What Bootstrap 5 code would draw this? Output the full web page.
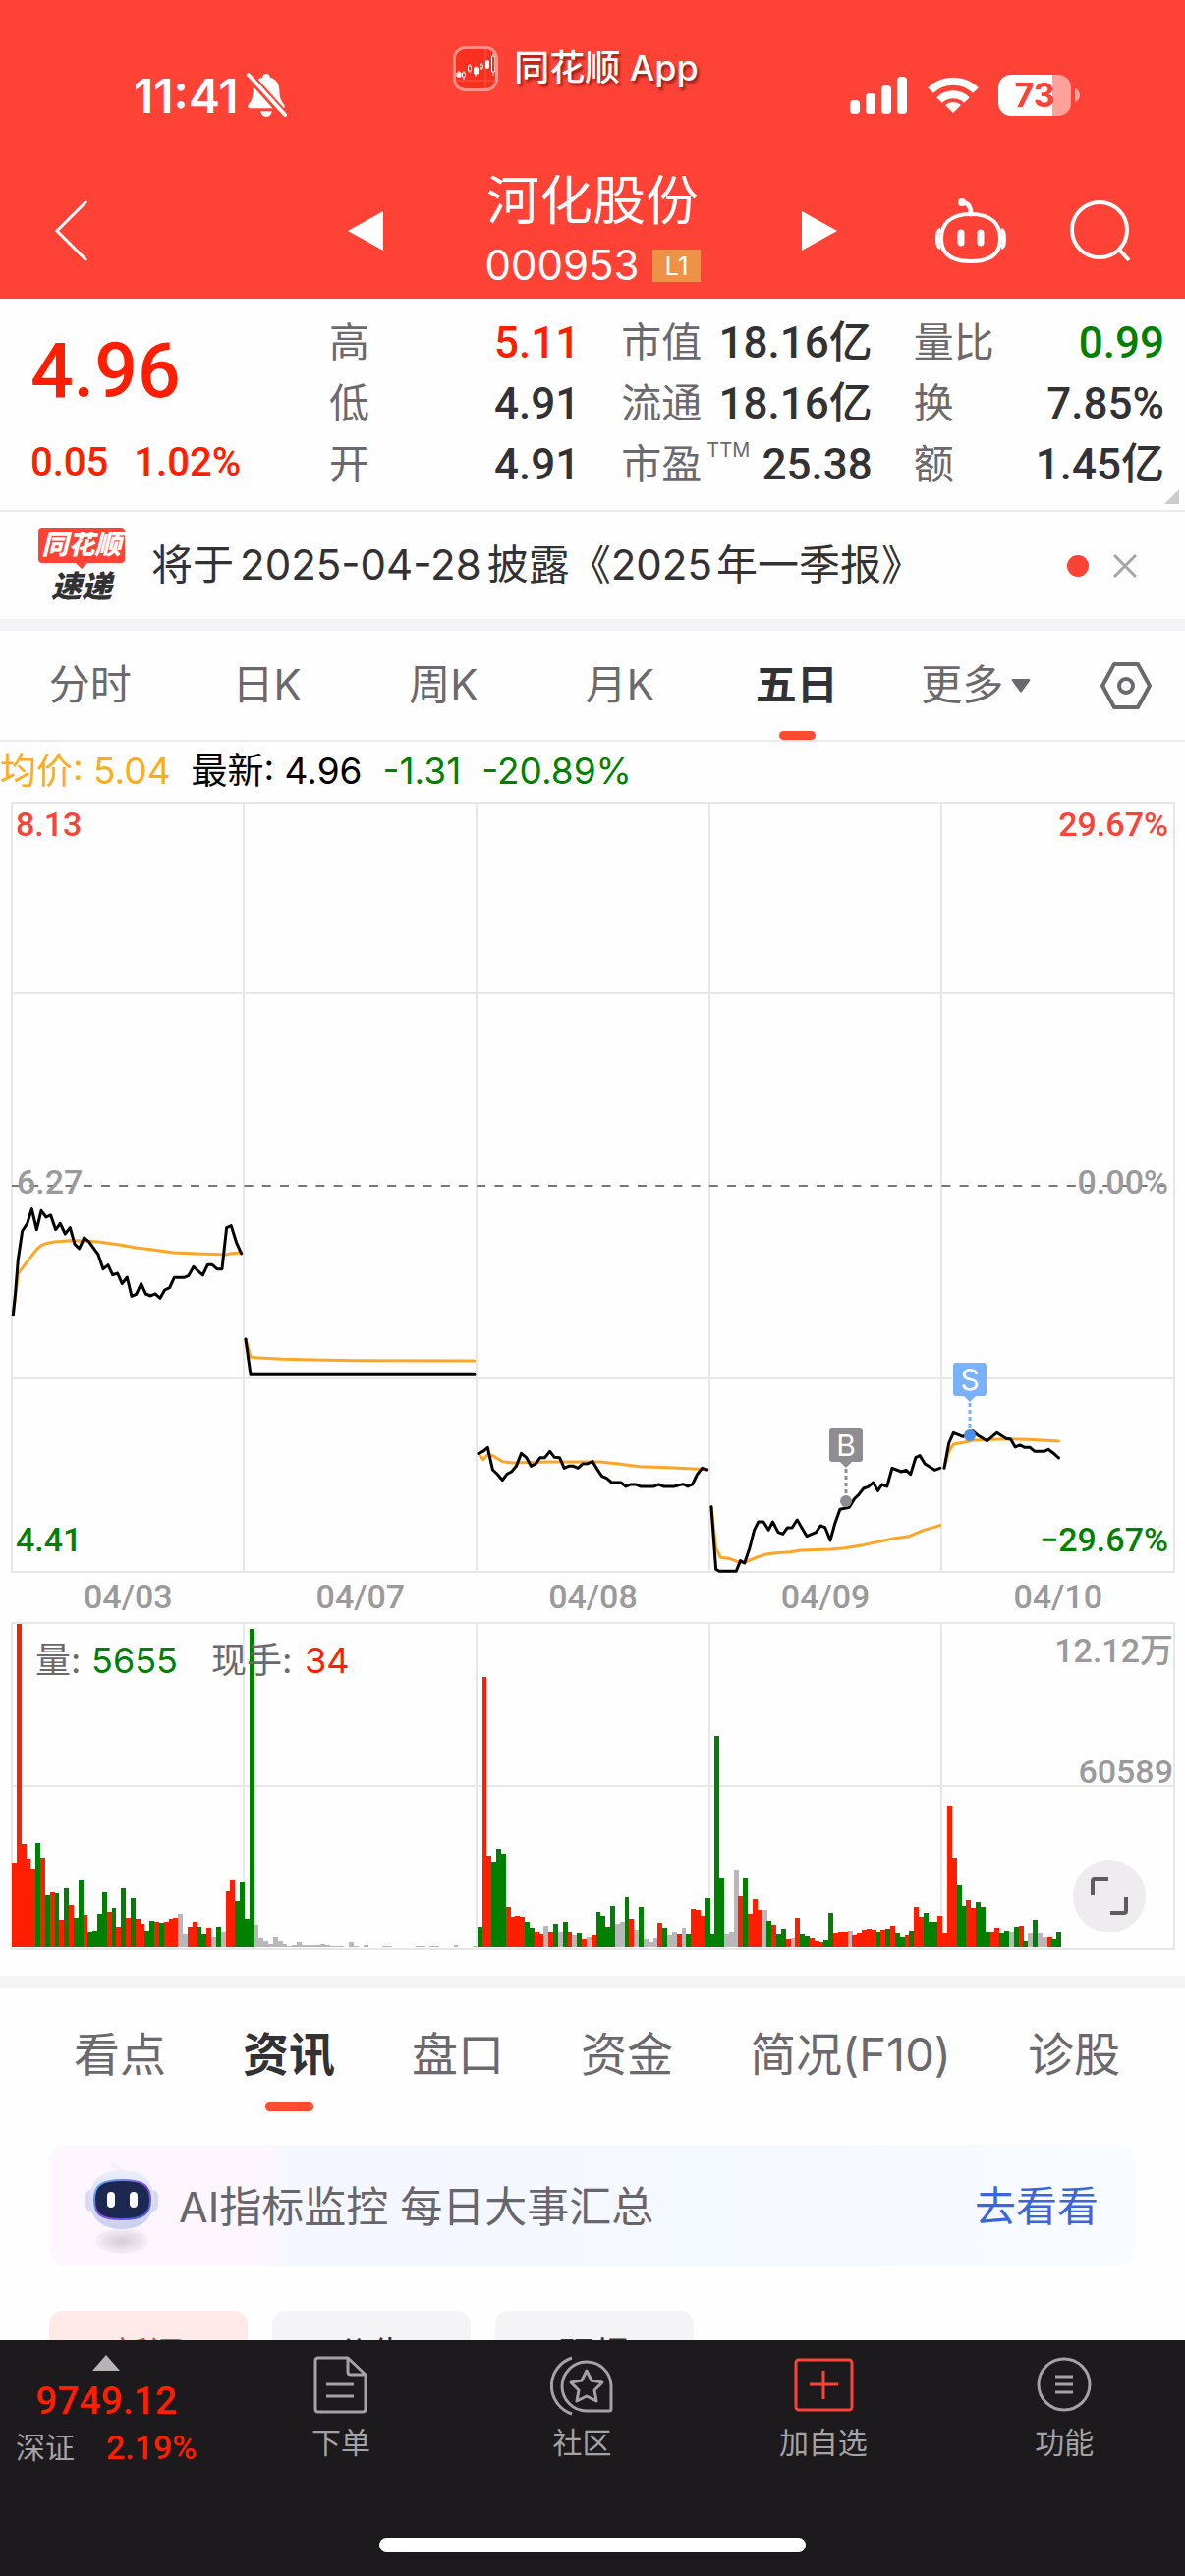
<!DOCTYPE html>
<html lang="zh-CN">
<head>
<meta charset="utf-8">
<meta name="viewport" content="width=device-width, initial-scale=1">
<title>河化股份 000953</title>
<link href="https://cdn.jsdelivr.net/npm/bootstrap@5.3.0/dist/css/bootstrap.min.css" rel="stylesheet">
<style>
  :root { --brand: #ff4236; --up: #ff1e00; --down: #008000; --ink: #323133; --soft: #6b696d; --mute: #9a999c; --line: #ebeaec; --band: #f4f3f6; }
  body { font-family: Inter, "Noto Sans CJK SC", sans-serif; color: var(--ink); background: #fefefe; line-height: 1.2; }
  a, button { color: inherit; text-decoration: none; }
  button { background: none; border: 0; padding: 0; }
  svg { display: block; flex: none; }
  .num { font-family: Roboto, "Noto Sans CJK SC", sans-serif; font-weight: 500; }
  .up { color: var(--up); } .down { color: var(--down); }

  .app-head { background: var(--brand); color: #fff; }
  .three-col { display: grid; grid-template-columns: 1fr auto 1fr; }
  .status-bar { height: 153px; padding: 0 106px 0 78px; }
  .status-side { padding-top: 68px; }
  .status-side.start { padding-left: 58px; gap: 7px; }
  .status-side.end { padding-top: 76px; gap: 20px; }
  .clock { font-size: 48px; font-weight: 600; line-height: 60px; }
  .brand-tag { font-size: 36px; font-weight: 500; padding-top: 46px; gap: 16px; text-shadow: 2px 3px 3px rgba(60,0,0,.55); height: 94px; }
  .brand-tag span { padding-right: 6px; }
  .battery { width: 74px; height: 42px; border-radius: 13px; font-size: 34px; font-weight: 700; color: var(--brand); background: linear-gradient(90deg, #fff 74%, #ffa19b 74%); }
  .title-bar { height: 151px; padding: 12px 54px 0; }
  .title-mid { padding: 8px 103px 0; }
  .stock-name { font-size: 54px; line-height: 64px; font-weight: 400; }
  .stock-code { font-size: 42px; line-height: 46px; gap: 14px; margin-top: 10px; }
  .level { font-size: 26px; line-height: 33px; padding: 0 12px; background: #ee9248; }

  .quote { display: grid; grid-template-columns: 262px repeat(3, 1fr); column-gap: 42px; padding: 14px 21px 15px 31px; border-bottom: 2px solid var(--line); }
  .price { font-size: 77px; line-height: 120px; }
  .change { font-size: 40px; line-height: 66px; gap: 26px; }
  .pair { height: 62px; }
  .pair dt { font-size: 41px; font-weight: 400; color: var(--soft); }
  .pair dd { font-size: 44px; }
  .pair sup { font-size: 20px; top: -22px; margin-left: 5px; font-weight: 400; vertical-align: baseline; position: relative; }
  .fold { right: 6px; bottom: 6px; }

  .notice { height: 109px; padding: 0 49px 0 38px; }
  .notice-logo { width: 90px; font-style: italic; font-weight: 900; line-height: 36px; }
  .logo-top { background: var(--brand); color: #fff; font-size: 27px; border-radius: 4px; width: 88px; }
  .logo-low { font-size: 31px; line-height: 36px; }
  .notice-text { font-size: 42px; margin-left: 26px; }
  .gap-s { margin: 0 6px; }
  .dot { width: 22px; height: 22px; border-radius: 50%; background: var(--brand); margin-right: 25px; }
  .band { height: 12px; background: var(--band); }

  .period { display: grid; grid-template-columns: repeat(5, 3fr) 3.1fr 2fr; height: 113px; border-bottom: 2px solid var(--line); font-size: 42px; color: var(--soft); padding-left: 2px; }
  .tab-item { position: relative; display: flex; align-items: center; justify-content: center; }
  .tab-item.current { font-weight: 700; color: var(--ink); }
  .tab-item.current::after { content: ""; position: absolute; bottom: 0; left: 50%; width: 37px; height: 9px; margin-left: -18px; border-radius: 5px; background: #ff4b2f; }
  .readout { height: 61px; font-size: 37px; gap: 21px; white-space: pre; }
  .days { display: grid; grid-template-columns: repeat(5, 1fr); padding: 0 11px 0 12px; height: 50px; font-size: 34px; color: var(--mute); }
  .days span { text-align: center; line-height: 48px; }
  .chart text { font: 500 34px Roboto, "Noto Sans CJK SC", sans-serif; fill: var(--mute); }
  .chart .plain { font: 400 36px Inter, "Noto Sans CJK SC", sans-serif; fill: var(--soft); }
  .chart .pin { font-size: 30px; fill: #fff; }
  .chart .t-red { fill: var(--brand); } .chart .t-up { fill: var(--up); } .chart .t-down { fill: var(--down); }
  .grid-line { stroke: #e7e6e9; stroke-width: 2; fill: none; }
  .series polyline { fill: none; stroke: #000; stroke-width: 3; stroke-linejoin: round; stroke-linecap: round; vector-effect: non-scaling-stroke; }
  .series .avg { stroke: #ffa526; }
  .expand { right: 40px; top: 242px; width: 74px; height: 74px; border-radius: 50%; background: #eeecef; }
  .vol-box { padding-bottom: 26px; }

  .sections { height: 126px; padding: 0 66px 0 75px; font-size: 47px; color: var(--soft); }
  .sections .tab-item { height: 136px; margin-bottom: -10px; }
  .sections .current::after { width: 49px; margin-left: -24px; bottom: 10px; }
  .promo { margin: 34px 50px 0; height: 123px; border-radius: 18px; padding: 4px 38px 0 36px; font-size: 43px; color: #68666b; gap: 20px; background: linear-gradient(90deg, #fdf6ff 20%, #f4f7ff 22%, #f4f8ff 60%, #f8fcff); }
  .promo a { color: #3a66dc; font-size: 42px; }
  .chips { padding: 46px 50px 0; gap: 25px; }
  .chip { width: 202px; height: 90px; border-radius: 14px; font-size: 36px; line-height: 44px; background: var(--band); }
  .chip.on { background: #ffe9e9; color: var(--brand); }

  .dock { background: #1c1a1d; color: #a3a2a5; height: 240px; }
  .dock-row { display: grid; grid-template-columns: 224fr repeat(4, 245fr); height: 130px; font-size: 30px; }
  .dock-index { padding: 15px 8px 0 0; }
  .dock-item { gap: 9px; padding-top: 13px; font-size: 30px; line-height: 36px; }
  .dock svg { stroke: currentColor; fill: none; stroke-width: 3; stroke-linejoin: round; }
  .index-num { font-size: 39px; line-height: 46px; margin-top: 8px; }
  .index-row { gap: 32px; line-height: 48px; }
  .index-row .num { font-size: 34px; }
  .home-bar { width: 36%; height: 15px; border-radius: 8px; background: #fff; margin: 71px auto 0; }
</style>
</head>
<body>

<header class="app-head">
  <div class="status-bar three-col">
    <div class="status-side start d-flex align-items-start">
      <span class="clock">11:41</span>
      <svg width="42" height="50" viewBox="0 0 44 50" class="mt-1" fill="#fff"><path d="M22 2c-3 0-4 2-4 4-7 2-10 7-10 14 0 8-2 11-5 15-1 2-1 4 2 4h34c3 0 3-2 2-4-3-4-5-7-5-15 0-7-3-12-10-14 0-2-1-4-4-4zM16 42a6 6 0 0 0 12 0z"/><path d="M1 1 43 48" stroke="#ff4236" stroke-width="9"/><path d="M3 3 42 46" stroke="#fff" stroke-width="4" stroke-linecap="round"/></svg>
    </div>
    <div class="brand-tag d-flex align-items-center">
      <svg width="46" height="46" viewBox="0 0 46 46"><rect x="1.500" y="1.500" width="43" height="43" rx="11" fill="#f8301f" stroke="#ff938a" stroke-width="3"/><path d="M33 3v40M4 35h38" stroke="#ff5a4a"/><g stroke="#fff" fill="#f8301f"><path d="M6 25v7M11 25v9M17 18v9M23 20v11M29 17v7M35 14v9M41 7v23"/><path d="M9.500 27h3v4h-3zM15.500 20h3v5h-3zM27.500 19h3v3h-3zM39.500 10h3v16h-3z"/><path fill="#fff" d="M4 27h4v4H4zM21.500 22h4v6h-4zM33.500 15h3v7h-3z"/></g></svg>
      <span>同花顺 App</span>
    </div>
    <div class="status-side end d-flex justify-content-end align-items-center align-self-start">
      <svg width="59" height="38" viewBox="0 0 59 38" fill="#fff"><rect y="24" width="10" height="14" rx="4"/><rect x="16" y="17" width="10" height="21" rx="4"/><rect x="32" y="9" width="10" height="29" rx="4"/><rect x="48" width="10" height="38" rx="4"/></svg>
      <svg width="52" height="38" viewBox="0 0 52 38" fill="none" stroke="#fff" stroke-width="8"><path d="M3 14a33 33 0 0 1 46 0"/><path d="M12 24a20 20 0 0 1 28 0"/><path d="M26 37l-8-8a12 12 0 0 1 16 0z" fill="#fff" stroke="none"/></svg>
      <div class="d-flex align-items-center gap-1">
        <span class="battery d-flex align-items-center justify-content-center">73</span>
        <svg width="6" height="14" viewBox="0 0 6 14"><path d="M0 0q5 2 5 7t-5 7z" fill="#ffa19b"/></svg>
      </div>
    </div>
  </div>
  <div class="title-bar three-col">
    <div class="d-flex align-items-center justify-content-between">
      <button aria-label="返回"><svg width="38" height="64" viewBox="0 0 38 64" fill="none" stroke="#fff" stroke-width="3"><path d="M34 2 4 32l30 30"/></svg></button>
      <button aria-label="上一只"><svg width="36" height="40" viewBox="0 0 36 40"><path d="M36 0v40L0 20z" fill="#fff"/></svg></button>
    </div>
    <div class="title-mid d-flex flex-column align-items-center">
      <h1 class="stock-name m-0">河化股份</h1>
      <div class="stock-code d-flex align-items-center"><span>000953</span><span class="level">L1</span></div>
    </div>
    <div class="d-flex align-items-center justify-content-between">
      <button aria-label="下一只"><svg width="36" height="40" viewBox="0 0 36 40"><path d="M0 0v40l36-20z" fill="#fff"/></svg></button>
      <div class="d-flex align-items-center" style="gap:64px">
        <button aria-label="智能助手"><svg width="72" height="68" viewBox="0 0 72 68" fill="none" stroke="#fff" stroke-width="4"><path d="M36 17q0-9-5-11" stroke-width="5" stroke-linecap="round"/><circle cx="27" cy="5" r="4" fill="#fff" stroke="none"/><path d="M36 17C14 17 6 28 6 42s8 23 30 23 30-9 30-23-8-25-30-25z"/><path d="M5 33q-3 0-3 9t3 9M67 33q3 0 3 9t-3 9"/><path d="M26 36v10M46 36v10" stroke-width="7" stroke-linecap="round"/></svg></button>
        <button aria-label="搜索"><svg width="64" height="64" viewBox="0 0 64 64" fill="none" stroke="#fff" stroke-width="4"><circle cx="31" cy="31" r="28"/><path d="M51 51l10 11"/></svg></button>
      </div>
    </div>
  </div>
</header>

<main>
  <section class="quote position-relative">
    <div>
      <div class="price num up">4.96</div>
      <div class="change num up d-flex"><span>0.05</span><span>1.02%</span></div>
    </div>
    <dl class="m-0">
      <div class="pair d-flex align-items-center justify-content-between"><dt>高</dt><dd class="num up m-0">5.11</dd></div>
      <div class="pair d-flex align-items-center justify-content-between"><dt>低</dt><dd class="num m-0">4.91</dd></div>
      <div class="pair d-flex align-items-center justify-content-between"><dt>开</dt><dd class="num m-0">4.91</dd></div>
    </dl>
    <dl class="m-0">
      <div class="pair d-flex align-items-center justify-content-between"><dt>市值</dt><dd class="num m-0">18.16亿</dd></div>
      <div class="pair d-flex align-items-center justify-content-between"><dt>流通</dt><dd class="num m-0">18.16亿</dd></div>
      <div class="pair d-flex align-items-center justify-content-between"><dt>市盈<sup>TTM</sup></dt><dd class="num m-0">25.38</dd></div>
    </dl>
    <dl class="m-0">
      <div class="pair d-flex align-items-center justify-content-between"><dt>量比</dt><dd class="num down m-0">0.99</dd></div>
      <div class="pair d-flex align-items-center justify-content-between"><dt>换</dt><dd class="num m-0">7.85%</dd></div>
      <div class="pair d-flex align-items-center justify-content-between"><dt>额</dt><dd class="num m-0">1.45亿</dd></div>
    </dl>
    <svg class="fold position-absolute" width="15" height="15" viewBox="0 0 15 15"><path d="M15 0v15H0z" fill="#cbcacc"/></svg>
  </section>

  <section class="notice d-flex align-items-center">
    <div class="notice-logo d-flex flex-column align-items-center">
      <span class="logo-top text-center">同花顺</span>
      <svg width="12" height="6" viewBox="0 0 12 6"><path d="M0 0h12L6 6z" fill="#ff4236"/></svg>
      <span class="logo-low">速递</span>
    </div>
    <a href="#" class="notice-text">将于<span class="gap-s">2025-04-28</span>披露《2025<span class="ms-1">年一季报》</span></a>
    <span class="dot ms-auto"></span>
    <button aria-label="关闭"><svg width="24" height="24" viewBox="0 0 24 24" stroke="#a5a4a7" stroke-width="3"><path d="M1 1l22 22M23 1 1 23"/></svg></button>
  </section>
  <div class="band"></div>

  <nav class="period">
    <a href="#" class="tab-item">分时</a>
    <a href="#" class="tab-item">日K</a>
    <a href="#" class="tab-item">周K</a>
    <a href="#" class="tab-item">月K</a>
    <a href="#" class="tab-item current">五日</a>
    <a href="#" class="tab-item">更多<svg class="ms-2" width="20" height="14" viewBox="0 0 20 14"><path d="M2 0h16q2 0 1 2l-8 11q-1 1-2 0L1 2Q0 0 2 0z" fill="#6b696d"/></svg></a>
    <button class="tab-item" aria-label="设置"><svg width="52" height="48" viewBox="0 0 52 48" fill="none" stroke="#6b696d" stroke-width="4" stroke-linejoin="round"><path d="M14 2h24l12 22-12 22H14L2 24z"/><circle cx="26" cy="24" r="7"/></svg></button>
  </nav>

  <div class="readout d-flex align-items-center">
    <span style="color:#ffac1c">均价: 5.04</span><span class="text-black">最新: 4.96</span><span class="down">-1.31</span><span class="down">-20.89%</span>
  </div>

  <svg class="chart w-100" viewBox="0 0 1206 785">
    <path class="grid-line" d="M12 1H1195V784H12zM12 195H1195M12 587H1195M248 1V784M485 1V784M722 1V784M958 1V784"/>
    <path d="M12 391H1188" stroke="#777" stroke-width="2" stroke-dasharray="9 9.200"/>
    <text class="t-red" x="16" y="35">8.13</text>
    <text class="t-red" x="1189" y="35" text-anchor="end">29.67%</text>
    <text x="17" y="399">6.27</text>
    <text x="1189" y="399" text-anchor="end">0.00%</text>
    <text class="t-down" x="16" y="763">4.41</text>
    <text class="t-down" x="1189" y="763" text-anchor="end">−29.67%</text>
    <g class="series" transform="translate(0 363) scale(.3333)">
      <polyline class="avg" points="40,479 55,352 75,326 112,278 126,266 140,260 165,255 215,251 260,252 300,255 360,263 415,273 460,278 530,288 600,291 690,294 707,290 737,288"/>
      <polyline points="40,479 47,410 55,310 68,222 83,200 97,155 112,218 126,160 141,180 155,174 170,218 184,199 199,231 214,212 228,262 242,276 257,243 271,254 300,294 315,338 330,326 344,356 359,351 373,383 388,363 402,421 416,415 431,383 445,414 460,420 474,414 489,427 503,402 518,395 532,364 562,364 576,358 591,331 619,357 634,325 648,325 663,338 678,338 692,212 706,206 722,258 737,291"/>
      <polyline class="avg" points="750,552 765,606 780,608 860,613 960,615 1080,617 1449,618"/>
      <polyline points="750,552 765,661 1449,661"/>
    </g>
    <g class="series" transform="translate(470 563) scale(.4694 .3333)">
      <polyline class="avg" points="36,301 46,320 56,305 67,308 88,326 110,330 190,327 300,327 340,333 385,341 460,345 532,350"/>
      <polyline points="36,301 46,295 56,283 67,351 78,366 88,383 98,364 108,357 118,340 129,301 140,314 150,340 160,333 170,314 180,314 191,295 201,313 212,314 222,346 232,340 242,340 252,346 262,333 273,332 284,326 294,351 304,371 314,377 325,390 345,390 356,402 366,396 377,396 387,402 417,402 427,396 438,402 460,402 480,395 490,402 500,396 510,366 521,346 532,351"/>
      <polyline class="avg" points="541,464 551,590 561,619 580,622 600,633 613,634 640,618 660,609 680,605 712,602 735,597 800,594 830,590 870,581 935,561 970,554 1000,536 1037,521"/>
      <polyline points="541,464 551,655 558,661 595,661 604,629 613,636 624,590 634,535 643,510 654,510 665,535 674,510 686,542 696,547 706,528 716,528 727,504 748,554 768,542 778,522 788,528 799,567 809,515 820,472 840,466 851,440 860,428 871,408 881,403 892,390 902,415 911,396 922,402 933,346 953,357 963,352 973,365 984,314 993,308 1004,333 1025,352 1037,346"/>
      <polyline class="avg" points="1046,346 1056,295 1066,273 1090,267 1110,261 1180,257 1230,259 1294,264"/>
      <polyline points="1046,346 1056,270 1066,238 1087,250 1098,240 1108,233 1118,245 1139,263 1160,238 1180,256 1190,258 1200,282 1210,276 1221,283 1232,283 1242,295 1262,295 1272,289 1282,300 1294,315"/>
    </g>
    <g fill="#8f8d91"><rect x="844" y="638" width="34" height="34" rx="3"/><path d="M855 672h12l-6 6z"/><circle cx="861" cy="712" r="6"/><path d="M861 679v28" stroke="#8f8d91" stroke-width="3" stroke-dasharray="4 3"/></g>
    <g fill="#7ab1fb"><rect x="970" y="571" width="34" height="34" rx="3"/><path d="M981 605h12l-6 6z"/><circle cx="987" cy="645" r="6" fill="#4a90e8"/><path d="M987 612v28" stroke="#7ab1fb" stroke-width="3" stroke-dasharray="4 3"/></g>
    <text class="plain pin" x="861" y="666" text-anchor="middle">B</text>
    <text class="plain pin" x="987" y="599" text-anchor="middle">S</text>
  </svg>
  <div class="days num"><span>04/03</span><span>04/07</span><span>04/08</span><span>04/09</span><span>04/10</span></div>

  <div class="vol-box position-relative">
    <svg class="chart w-100" viewBox="0 0 1206 334">
      <path class="grid-line" d="M12 1H1195V333H12zM12 167H1195M248 1V333M485 1V333M722 1V333M958 1V333"/>
      <g id="volume" shape-rendering="crispEdges"></g>
      <text class="plain" x="36" y="52">量:</text><text class="plain t-down" x="93" y="52">5655</text>
      <text class="plain" x="215" y="52">现手:</text><text class="plain t-up" x="310" y="52">34</text>
      <text x="1194" y="41" text-anchor="end">12.12万</text>
      <text x="1194" y="164" text-anchor="end">60589</text>
    </svg>
    <button class="expand position-absolute d-flex align-items-center justify-content-center" aria-label="全屏"><svg width="38" height="38" viewBox="0 0 38 38" fill="none" stroke="#5d5b5f" stroke-width="4"><path d="M2 18V4q0-2 2-2h14M36 20v14q0 2-2 2H20"/></svg></button>
  </div>
  <div class="band"></div>

  <nav class="sections d-flex justify-content-between">
    <a href="#" class="tab-item">看点</a>
    <a href="#" class="tab-item current">资讯</a>
    <a href="#" class="tab-item">盘口</a>
    <a href="#" class="tab-item">资金</a>
    <a href="#" class="tab-item">简况(F10)</a>
    <a href="#" class="tab-item">诊股</a>
  </nav>

  <section class="promo d-flex align-items-center">
    <svg width="76" height="100" viewBox="0 0 76 100">
      <defs>
        <linearGradient id="shell" x1="0" y1="0" x2="0" y2="1"><stop offset="0" stop-color="#eceefb"/><stop offset="1" stop-color="#c9cfef"/></linearGradient>
        <linearGradient id="rim" x1="0" y1="0" x2="1" y2="1"><stop offset="0" stop-color="#58bdf5"/><stop offset=".5" stop-color="#8a4ae0"/><stop offset="1" stop-color="#3f63ea"/></linearGradient>
        <radialGradient id="shade"><stop offset="0" stop-color="#d3cdd9"/><stop offset="1" stop-color="#f6effa"/></radialGradient>
      </defs>
      <ellipse cx="38" cy="84" rx="27" ry="13" fill="url(#shade)"/>
      <path d="M27 6q8 2 10 8" stroke="#f3f1fb" stroke-width="5" fill="none"/>
      <rect x="1" y="32" width="74" height="22" rx="6" fill="#d5daf5"/>
      <path d="M38 12C13 12 5 26 5 42s10 30 33 30 33-14 33-30-8-30-33-30z" fill="url(#shell)"/>
      <path d="M38 22c-21 0-28 5-28 20s7 20 28 20 29-5 29-20-8-20-29-20z" fill="#1d2850" stroke="url(#rim)" stroke-width="2"/>
      <path d="M27 38v8M50 38v8" stroke="#fff" stroke-width="8" stroke-linecap="round"/>
    </svg>
    <span>AI指标监控 每日大事汇总</span>
    <a href="#" class="ms-auto">去看看</a>
  </section>

  <div class="chips d-flex">
    <button class="chip on">新闻</button>
    <button class="chip">公告</button>
    <button class="chip">研报</button>
  </div>
</main>

<footer class="dock fixed-bottom">
  <nav class="dock-row">
    <a href="#" class="dock-index d-flex flex-column align-items-center">
      <svg width="28" height="16" viewBox="0 0 28 16" style="stroke:none;fill:#b5b4b7"><path d="M14 0l14 16H0z"/></svg>
      <span class="index-num num up">9749.12</span>
      <span class="index-row d-flex align-items-center"><span>深证</span><span class="num up">2.19%</span></span>
    </a>
    <a href="#" class="dock-item d-flex flex-column align-items-center"><svg width="64" height="64" viewBox="0 0 64 64"><path d="M39 5H9q-3 0-3 3v49q0 3 3 3h45q3 0 3-3V22zM39 5v14q0 3 3 3h15M17 32h28M17 44h28"/></svg>下单</a>
    <a href="#" class="dock-item d-flex flex-column align-items-center"><svg width="64" height="64" viewBox="0 0 64 64"><path d="M62 33A25 25 0 1 0 37 59h23q2 0 2-2z"/><path d="M22 5a30 30 0 0 0 0 57"/><path d="M37 18l5 10 11 2-8 8 2 11-10-5-10 5 2-11-8-8 11-2z"/></svg>社区</a>
    <a href="#" class="dock-item d-flex flex-column align-items-center"><svg width="64" height="64" viewBox="0 0 64 64" style="stroke:#ff4236"><rect x="4" y="7" width="57" height="51" rx="3"/><path d="M32 18v29M18 32h29"/></svg>加自选</a>
    <a href="#" class="dock-item d-flex flex-column align-items-center"><svg width="64" height="64" viewBox="0 0 64 64"><circle cx="32" cy="32" r="26"/><path d="M23 24h18M23 32h18M23 40h18"/></svg>功能</a>
  </nav>
  <div class="home-bar"></div>
</footer>

<script src="https://cdn.jsdelivr.net/npm/bootstrap@5.3.0/dist/js/bootstrap.bundle.min.js"></script>
<script>
  // One entry per time slot: colour (r up, g down, x flat) and the bar's top on a 0-1028 scale.
  const slots = `r770 r40 r712 r758 r789 g709 r756 g868 r859 g863 r944 g849 r899 g937 g823 r929 g980 g976 g925 g859 r920 g908 r964 g849 r938 g879 r940 r956 g976 g946 r950 g952 r949 r940 r938 x927 x990 r965 r950 g966 g990 r969 x998 g966 x982 r857 r823 g888 g829 g942
    g56 x959 x1002 x1010 x1018 x999 x1010 x1018 x1025 x1023 x1014 x1021 x1023 x1023 x1023 x1020 x1023 x1026 x1026 x1026 x1028 x1012 x1025 x1028 x1023 x1028 x1028 x1028 x1026 x1026 x1028 x1028 x1028 x1028 x1028 x1026 x1026 x1028 x1026 x1026 x1028 x1028 x1028 x1023 x1028 x1027 x1027 x1026
    g965 r203 r748 g766 g728 g744 r906 r934 r933 r935 g949 g968 r981 r990 x963 r983 g957 x979 g949 r982 x993 g986 r1003 x997 r993 g920 g933 g965 g901 x955 x950 g876 r942 x973 g905 x1003 x1014 x1002 r954 g969 x993 x980 r990 x967 g990 r912 r914 r931 g879
    g990 g384 g817 x990 x983 x791 r871 g819 r927 r881 r913 x914 g947 r960 g990 g972 r1003 x1000 r939 g990 g994 r1000 r1010 r1014 g1008 g922 r985 r981 r981 x976 r992 r985 r975 r971 r975 g981 r975 g971 r963 g987 g999 r993 g977 r904 r936 g922 g949 g949 r931
    r986 r597 r756 g839 g903 r884 r907 g889 g904 g980 r984 r967 g986 g977 x983 g965 r963 g1010 x987 g943 x986 x998 r999 g1004 g983`.trim().split(/\s+/);
  const paint = { r: '#ff1e00', g: '#008000', x: '#b9b7ba' };
  document.getElementById('volume').innerHTML = slots.map((s, i) => {
    const h = (1028 - s.slice(1)) / 3;
    return `<rect x="${(12 + i * 4.833).toFixed(1)}" y="${(331 - h).toFixed(1)}" width="4.9" height="${h.toFixed(1)}" fill="${paint[s[0]]}"/>`;
  }).join('');
</script>
</body>
</html>
